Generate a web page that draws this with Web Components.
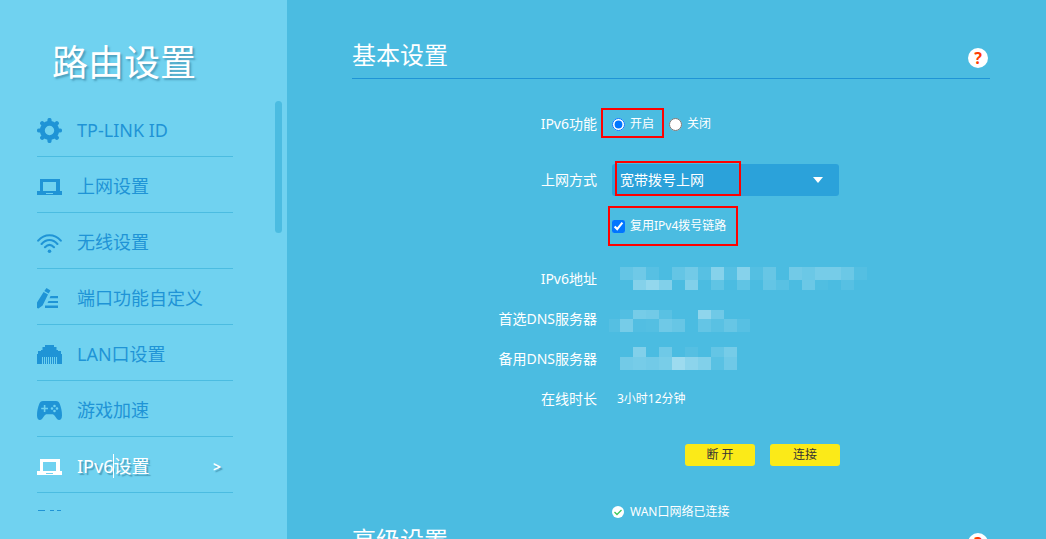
<!DOCTYPE html>
<html lang="zh-CN">
<head>
<meta charset="utf-8">
<title>路由设置</title>
<style>
  * { box-sizing: border-box; }
  body {
    margin: 0;
    height: 100vh;
    display: flex;
    overflow: hidden;
    color: #fff;
    font-family: "Noto Sans", "Noto Sans CJK SC", sans-serif;
    font-size: 14px;
    line-height: 20px;
    background: #4bbce1;
  }
  main {
    flex: 1;
    padding: 42px 56px 0 65px;
    overflow: hidden;
  }
</style>
</head>
<body>
<side-bar>
  <span slot="title">路由设置</span>
  <menu-item icon="gear">TP-LINK ID</menu-item>
  <menu-item icon="laptop">上网设置</menu-item>
  <menu-item icon="wifi">无线设置</menu-item>
  <menu-item icon="pencil">端口功能自定义</menu-item>
  <menu-item icon="port">LAN口设置</menu-item>
  <menu-item icon="gamepad">游戏加速</menu-item>
  <menu-item icon="laptop" active>IPv6<text-caret></text-caret>设置</menu-item>
  <menu-item icon="blocks"></menu-item>
</side-bar>
<main>
  <settings-section>
    <span slot="title">基本设置</span>
    <form-row class="gap">
      <span slot="label">IPv6功能</span>
      <choice-option>
        <input type="radio" name="ipv6" id="on" checked><label for="on">开启</label>
        <mark-box slot="mark" style="inset: -6px -10px -4px -11px"></mark-box>
      </choice-option>
      <choice-option>
        <input type="radio" name="ipv6" id="off"><label for="off">关闭</label>
      </choice-option>
    </form-row>
    <form-row>
      <label slot="label" for="mode">上网方式</label>
      <select-box>
        <select id="mode"><option>宽带拨号上网</option></select>
        <mark-box slot="mark" style="inset: -3px 98px 0 3px"></mark-box>
      </select-box>
    </form-row>
    <form-row class="tall">
      <choice-option>
        <input type="checkbox" id="reuse" checked><label for="reuse">复用IPv4拨号链路</label>
        <mark-box slot="mark" style="inset: -10px -12px -10px -4px"></mark-box>
      </choice-option>
    </form-row>
    <form-row>
      <span slot="label">IPv6地址</span>
      <mosaic-strip rows="1 14 24" top="14 20 7 0 14 22 7 33 7 33 5 16 0 22 18 24 24 18 5" bottom="0 32 40 30 0 30 0 12 0 12 0 14 8 0 18 3 0 7"></mosaic-strip>
    </form-row>
    <form-row>
      <span slot="label">首选DNS服务器</span>
      <mosaic-strip rows="4 13 26" lead="6" top="4 24 22 8 0 0 38 20" bottom="24 4 5 20 16 0 14 8 16 7"></mosaic-strip>
    </form-row>
    <form-row>
      <span slot="label">备用DNS服务器</span>
      <mosaic-strip rows="1 11 24" top="0 30 0 20 0 6 0 14 24" bottom="22 24 22 25 46 36 30 8 20"></mosaic-strip>
    </form-row>
    <form-row>
      <span slot="label">在线时长</span>
      <plain-value>3小时12分钟</plain-value>
    </form-row>
    <button-bar>
      <button type="button">断 开</button>
      <button type="button">连接</button>
    </button-bar>
    <status-line>WAN口网络已连接</status-line>
  </settings-section>
  <settings-section>
    <span slot="title">高级设置</span>
  </settings-section>
</main>

<script>
const icons = {
  gear: `<circle cx="12.5" cy="12.5" r="7.2" fill="none" stroke="currentColor" stroke-width="5"/>
    <path d="M12.5 5V2M12.5 20v3M5 12.5H2M20 12.5h3M7 7L5.2 5.2M18 18l1.8 1.8M18 7l1.8-1.8M7 18l-1.8 1.8" stroke="currentColor" stroke-width="4.2" stroke-linecap="round"/>`,
  laptop: `<path fill-rule="evenodd" d="M3 5h20v12h2v4H0v-4h3zM6 8v9h13V8zM9 19v1h7v-1z"/>`,
  wifi: `<g fill="none" stroke="currentColor" stroke-width="2.1" stroke-linecap="round"><path d="M1.2 10.6C7.5 3.4 17.5 3.4 23.8 10.6M4.6 14C9.2 8.7 15.8 8.7 20.4 14M8 17.2c2.8-2.8 6.2-2.8 9 0"/></g><circle cx="12.5" cy="21.2" r="1.8"/>`,
  pencil: `<path d="M9.500 2l4 2.500-1.800 3-4.400-2.600zM6.600 6l4.400 2.600-5.400 10.800L1.500 22.400 0 22 0 16.600z"/><path d="M13.500 10H21v2.200h-8.500zM11.500 15H21v2H10.500zM8 19.500h13V22H8z"/>`,
  port: `<path d="M8 3h9v2h2.500v3H21v1h3v3h1v10h-5v-7h-1v7h-1v-7h-1v7h-1v-7h-1v7h-1v-7h-1v7h-1v-7h-1v7h-1v-7H9v7H8v-7H7v7H6v-7H5v7H0V12h1V9h3V8h1.500V5H8z"/>`,
  gamepad: `<path fill-rule="evenodd" d="M6 3h13c2 0 3 1 3.800 3 1.400 4 2.200 7 2.200 11.500 0 4.500-3 5.500-5 3.500l-2.500-3.500c-.8-1-1.500-1.300-2.500-1.300h-5c-1 0-1.700.3-2.500 1.300L5 21c-2 2-5 1-5-3.500C0 13 .8 10 2.200 6 3 4 4 3 6 3zM6.800 7v2.700H4.200v1.600h2.600V14h1.600v-2.700H11V9.700H8.400V7zM17.500 6.700a1.300 1.300 0 100 2.600 1.300 1.300 0 000-2.600zM17.500 11.700a1.300 1.300 0 100 2.600 1.300 1.300 0 000-2.600zM15 9.200a1.300 1.300 0 100 2.600 1.300 1.300 0 000-2.600zM20 9.200a1.300 1.300 0 100 2.600 1.300 1.300 0 000-2.600z"/>`,
  blocks: `<path d="M1 0h7v10H1zM13 0h4v10h-4zM20 0h4v10h-4zM1 14h23v9H1z"/>`
};

class BaseElement extends HTMLElement {
  constructor() {
    super();
    this.attachShadow({ mode: "open" });
  }
  connectedCallback() {
    this.shadowRoot.innerHTML = `<style>* { box-sizing: border-box; }</style>` + this.render();
  }
}

class SideBar extends BaseElement {
  render() {
    return `
      <style>
        :host {
          flex: 0 0 287px;
          display: flex;
          flex-direction: column;
          padding: 39px 5px 28px 37px;
          background: #70d2f0;
        }
        h1 {
          margin: 0 0 14px 15px;
          font-size: 36px;
          font-weight: 400;
          line-height: 48px;
          text-shadow: 2px 2px 2px rgba(40, 110, 140, .5);
        }
        .body {
          flex: 1;
          min-height: 0;
          display: flex;
          justify-content: space-between;
        }
        nav { width: 196px; overflow: hidden; }
        .thumb {
          width: 7px;
          height: 132px;
          border-radius: 4px;
          background: #4bbce1;
        }
      </style>
      <h1><slot name="title"></slot></h1>
      <div class="body">
        <nav><slot></slot></nav>
        <div class="thumb"></div>
      </div>`;
  }
}

class MenuItem extends BaseElement {
  render() {
    return `
      <style>
        :host { display: block; color: #1f94d6; }
        :host([active]) {
          color: #fff;
          text-shadow: 2px 2px 1px rgba(40, 110, 140, .5);
        }
        a {
          display: flex;
          align-items: center;
          height: 56px;
          padding: 4px 12px 0 0;
          border-bottom: 1px solid #4bbce1;
          color: inherit;
          font-size: 18px;
          line-height: 24px;
          text-decoration: none;
        }
        svg { width: 25px; height: 25px; margin-right: 15px; fill: currentColor; }
        .text { flex: 1; padding-bottom: 2px; white-space: nowrap; }
        .arrow { font-size: 14px; font-weight: 700; }
      </style>
      <a href="#">
        <svg viewBox="0 0 25 25">${icons[this.getAttribute("icon")]}</svg>
        <span class="text"><slot></slot></span>
        ${this.hasAttribute("active") ? `<span class="arrow">&gt;</span>` : ""}
      </a>`;
  }
}

class TextCaret extends BaseElement {
  render() {
    return `
      <style>
        :host { display: inline-block; position: relative; width: 0; height: 24px; vertical-align: top; }
        i { position: absolute; left: 0; top: 0; width: 1px; height: 24px; background: #fff; }
      </style>
      <i></i>`;
  }
}

class SettingsSection extends BaseElement {
  render() {
    return `
      <style>
        :host { display: block; margin-bottom: 5px; }
        header {
          display: flex;
          justify-content: space-between;
          align-items: flex-end;
          padding: 0 2px 10px 0;
          border-bottom: 1px solid #1f94d6;
          margin-bottom: 25px;
        }
        h2 { margin: 0; font-size: 24px; font-weight: 400; line-height: 26px; }
        button {
          width: 20px;
          height: 20px;
          padding: 0;
          border: 0;
          border-radius: 50%;
          background: #fff;
          color: #ff3c00;
          font: 700 16px/20px "Noto Sans", sans-serif;
        }
      </style>
      <header>
        <h2><slot name="title"></slot></h2>
        <button type="button">?</button>
      </header>
      <slot></slot>`;
  }
}

class FormRow extends BaseElement {
  render() {
    return `
      <style>
        :host {
          display: grid;
          grid-template-columns: 245px 1fr;
          column-gap: 15px;
          align-items: center;
          height: 40px;
        }
        :host(.gap) { margin-bottom: 16px; }
        :host(.tall) { height: 52px; margin-bottom: 7px; }
        .label { text-align: right; white-space: nowrap; }
        .value { display: flex; align-items: center; gap: 15px; }
      </style>
      <div class="label"><slot name="label"></slot></div>
      <div class="value"><slot></slot></div>`;
  }
}

class ChoiceOption extends BaseElement {
  render() {
    return `
      <style>
        :host {
          position: relative;
          display: flex;
          align-items: center;
          gap: 5px;
          font-size: 12px;
        }
        ::slotted(input) { width: 13px; height: 13px; margin: 0; }
      </style>
      <slot></slot><slot name="mark"></slot>`;
  }
}

class SelectBox extends BaseElement {
  render() {
    return `
      <style>
        :host { position: relative; display: block; width: 227px; height: 32px; }
        ::slotted(select) {
          appearance: none;
          width: 100%;
          height: 32px;
          padding: 0 8px;
          border: 0;
          border-radius: 3px;
          background: #2ba2da;
          color: #fff;
          font: inherit;
        }
        svg { position: absolute; right: 16px; top: 13px; width: 10px; height: 6px; fill: #fff; pointer-events: none; }
      </style>
      <slot></slot>
      <svg viewBox="0 0 10 6"><path d="M0 0h10L5 6z"/></svg>
      <slot name="mark"></slot>`;
  }
}

// red frame laid over a control
class MarkBox extends BaseElement {
  render() {
    return `<style>:host { position: absolute; border: 2px solid #f00; pointer-events: none; box-sizing: border-box; }</style>`;
  }
}

// two rows of 13px censor blocks, numbers are opacity in percent
class MosaicStrip extends BaseElement {
  render() {
    const [y0, y1, y2] = this.getAttribute("rows").split(" ").map(Number);
    const cells = (name, y, h) => this.getAttribute(name).split(" ").map((a, i) =>
      `<rect x="${8 + i * 13}" y="${y}" width="13" height="${h}" fill-opacity="${a / 100}"/>`).join("");
    const lead = this.getAttribute("lead");
    return `
      <style>
        :host { display: block; }
        svg { display: block; width: 260px; height: 26px; overflow: visible; fill: #fff; shape-rendering: crispEdges; }
      </style>
      <svg viewBox="0 0 260 26">
        ${cells("top", y0, y1 - y0)}${cells("bottom", y1, y2 - y1)}
        ${lead ? `<rect x="-3" y="${y1}" width="11" height="${y2 - y1}" fill-opacity="${lead / 100}"/>` : ""}
      </svg>`;
  }
}

class PlainValue extends BaseElement {
  render() {
    return `<style>:host { display: block; padding-left: 5px; font-size: 12px; }</style><slot></slot>`;
  }
}

class ButtonBar extends BaseElement {
  render() {
    return `
      <style>
        :host {
          display: flex;
          justify-content: flex-end;
          gap: 15px;
          width: 488px;
          margin: 25px 0 36px;
        }
        ::slotted(button) {
          width: 70px;
          height: 22px;
          padding: 0;
          border: 0;
          border-radius: 3px;
          background: #fbea18;
          color: #333;
          font: inherit;
          font-size: 12px;
        }
      </style>
      <slot></slot>`;
  }
}

class StatusLine extends BaseElement {
  render() {
    return `
      <style>
        :host {
          display: flex;
          align-items: center;
          gap: 6px;
          padding-left: 260px;
          font-size: 12px;
          line-height: 20px;
        }
        svg { width: 12px; height: 12px; }
      </style>
      <svg viewBox="0 0 12 12"><circle cx="6" cy="6" r="6" fill="#fff"/><path d="M2.500 6l2.500 2.500L9.500 4" fill="none" stroke="#3fc65c" stroke-width="1.300"/></svg>
      <span><slot></slot></span>`;
  }
}

customElements.define("side-bar", SideBar);
customElements.define("menu-item", MenuItem);
customElements.define("text-caret", TextCaret);
customElements.define("settings-section", SettingsSection);
customElements.define("form-row", FormRow);
customElements.define("choice-option", ChoiceOption);
customElements.define("select-box", SelectBox);
customElements.define("mark-box", MarkBox);
customElements.define("mosaic-strip", MosaicStrip);
customElements.define("plain-value", PlainValue);
customElements.define("button-bar", ButtonBar);
customElements.define("status-line", StatusLine);
</script>
</body>
</html>
